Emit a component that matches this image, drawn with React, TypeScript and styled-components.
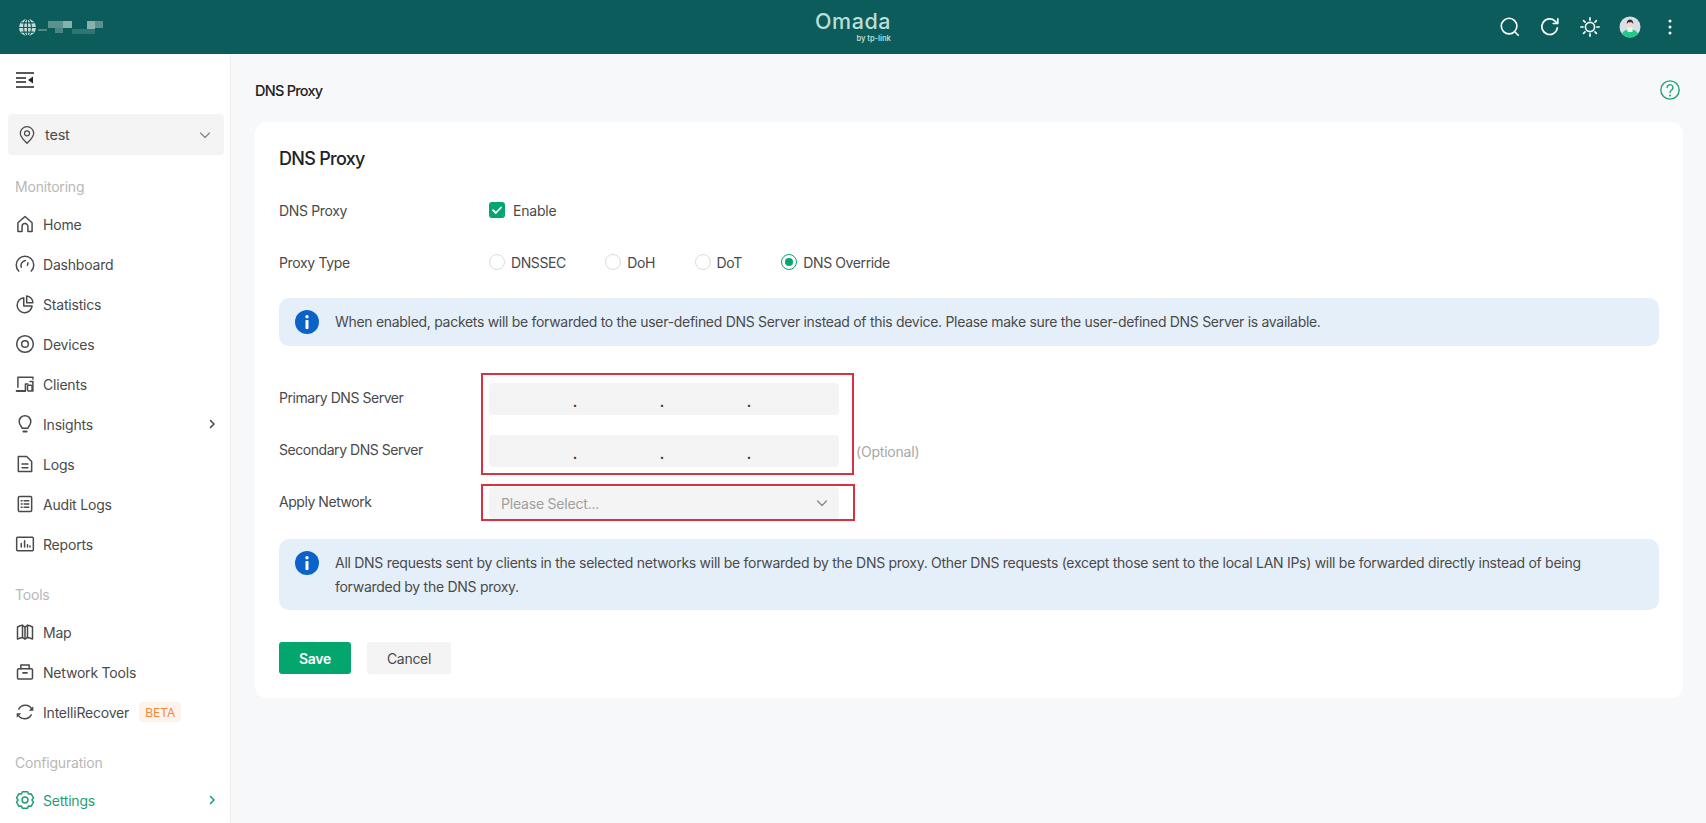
import React from "react";
import styled, { createGlobalStyle } from "styled-components";

const Global = createGlobalStyle`
	html, body {
		margin: 0;
		height: 100%;
		overflow: hidden;
		background: #f7f8f9;
		font-family: Inter, "Noto Sans", sans-serif;
		font-size: 14px;
		letter-spacing: -0.2px;
		color: #4a4a4a;
	}
	* { box-sizing: border-box; }
`;

const Page = styled.div`
	width: 1706px;
	height: 823px;
	display: flex;
	flex-direction: column;
	overflow: hidden;
`;

const Header = styled.header`
	height: 54px;
	flex: none;
	display: grid;
	grid-template-columns: 1fr auto 1fr;
	align-items: center;
	background: #0b5c5a;
	padding: 0 19px;
`;

const Brand = styled.div`
	display: flex;
	align-items: center;
`;

const Logo = styled.div`
	display: flex;
	flex-direction: column;
	align-items: flex-end;
	padding-bottom: 3px;
	color: #bcdcd6;
`;

const LogoName = styled.span`
	font-size: 21.5px;
	line-height: 26px;
	font-weight: 500;
	letter-spacing: 0.5px;
`;

const LogoSub = styled.span`
	font-size: 7.5px;
	line-height: 9px;
	font-weight: 600;
	letter-spacing: 0;
`;

const HeaderActions = styled.div`
	display: flex;
	justify-content: flex-end;
	align-items: center;
	gap: 18px;
	color: #fff;
	margin-right: 6px;
`;

const Blur = styled.svg`
	filter: blur(0.7px);
`;

const Body = styled.div`
	flex: 1;
	display: flex;
	min-height: 0;
`;

const Sidebar = styled.aside`
	width: 231px;
	flex: none;
	background: #fff;
	border-right: 1px solid #ececec;
	padding: 15px 6px 0 8px;
	color: #4a4a4a;
`;

const Collapse = styled.div`
	height: 22px;
	padding-left: 8px;
	color: #222;
	display: flex;
	align-items: center;
`;

const SiteSelect = styled.div`
	height: 41px;
	margin: 23px 0 22px;
	border-radius: 4px;
	background: #f4f4f4;
	display: flex;
	align-items: center;
	padding: 0 12px 0 9px;
	gap: 8px;
	font-size: 14.5px;
`;

const SiteName = styled.span`
	flex: 1;
`;

const SectionLabel = styled.div`
	height: 20px;
	line-height: 20px;
	margin: 21px 0 7px 7px;
	color: #b8b8b8;
`;

const NavItem = styled.div<{ $active?: boolean }>`
	height: 40px;
	display: flex;
	align-items: center;
	gap: 8px;
	padding: 0 6px 0 7px;
	color: ${(p) => (p.$active ? "#1f9e78" : "#4a4a4a")};
`;

const NavText = styled.span`
	white-space: nowrap;
`;

const Beta = styled.span`
	margin-left: 2px;
	padding: 0 6px;
	height: 20px;
	line-height: 21px;
	border-radius: 3px;
	background: #fdf3ea;
	color: #f0883e;
	font-size: 12px;
	letter-spacing: 0;
`;

const Chevron = styled.svg`
	margin-left: auto;
	flex: none;
`;

const Main = styled.main`
	flex: 1;
	padding: 0 23px 0 24px;
`;

const PageHead = styled.div`
	height: 68px;
	padding: 19px 2px 15px 0;
	display: flex;
	justify-content: space-between;
	align-items: center;
`;

const PageTitle = styled.h1`
	margin: 0;
	font-size: 14.5px;
	font-weight: 500;
	letter-spacing: -0.75px;
	color: #222;
`;

const HelpIcon = styled.div`
	color: #1f9e78;
	display: flex;
`;

const Card = styled.section`
	background: #fff;
	border-radius: 12px;
	padding: 24px;
`;

const CardTitle = styled.h2`
	margin: 0 0 24px;
	height: 24px;
	line-height: 26px;
	font-size: 18px;
	font-weight: 500;
	letter-spacing: -0.7px;
	color: #222;
`;

const Row = styled.div<{ $gap?: number }>`
	display: grid;
	grid-template-columns: 210px 1fr;
	align-items: center;
	min-height: 32px;
	margin-bottom: ${(p) => p.$gap ?? 20}px;
`;

const Label = styled.label`
	letter-spacing: -0.35px;
`;

const FieldLabel = styled(Label)`
	margin-bottom: 3px;
	letter-spacing: -0.45px;
`;

const Checkbox = styled.span`
	width: 16px;
	height: 16px;
	border-radius: 3px;
	background: #05a66e;
	display: flex;
	align-items: center;
	justify-content: center;
	color: #fff;
`;

const OptionLine = styled.div`
	display: flex;
	align-items: center;
	gap: 8px;
`;

const RadioGroup = styled.div`
	display: flex;
	align-items: center;
	gap: 39.5px;
	letter-spacing: -0.4px;
`;

const RadioOption = styled.div`
	display: flex;
	align-items: center;
	gap: 6px;
`;

const Radio = styled.span<{ $on?: boolean }>`
	width: 16px;
	height: 16px;
	border-radius: 50%;
	border: 1px solid ${(p) => (p.$on ? "#05a66e" : "#dcdcdc")};
	display: flex;
	align-items: center;
	justify-content: center;
	&::after {
		content: "";
		display: ${(p) => (p.$on ? "block" : "none")};
		width: 8px;
		height: 8px;
		border-radius: 50%;
		background: #05a66e;
	}
`;

const Banner = styled.div<{ $gap: number }>`
	display: flex;
	align-items: flex-start;
	gap: 16px;
	padding: 12px 16px;
	margin-bottom: ${(p) => p.$gap}px;
	background: #e5eff9;
	border-radius: 10px;
	line-height: 24px;
	letter-spacing: -0.3px;
`;

const TallBanner = styled(Banner)`
	padding-bottom: 11px;
	letter-spacing: -0.28px;
`;

const BannerIcon = styled.svg`
	flex: none;
`;

const Fields = styled.div`
	position: relative;
`;

const RedBox = styled.div<{ $top: number; $height: number; $width: number }>`
	position: absolute;
	left: 202px;
	top: ${(p) => p.$top}px;
	width: ${(p) => p.$width}px;
	height: ${(p) => p.$height}px;
	border: 2px solid #d8323f;
	pointer-events: none;
`;

const FieldLine = styled.div`
	display: flex;
	align-items: center;
	gap: 17px;
`;

const IpInput = styled.div`
	width: 350px;
	height: 32px;
	border-radius: 4px;
	background: #f4f4f4;
	display: grid;
	grid-template-columns: repeat(4, 1fr);
	padding: 0 1px;
`;

const IpDot = styled.span`
	text-align: right;
	padding: 11px 0 0;
	line-height: 16px;
	color: #333;
	font-weight: 600;
`;

const Hint = styled.span`
	color: #a8a8a8;
`;

const Select = styled.div`
	width: 350px;
	height: 32px;
	border-radius: 4px;
	background: #f4f4f4;
	display: flex;
	align-items: center;
	justify-content: space-between;
	padding: 0 10px 0 12px;
	color: #a0a0a0;
`;

const Actions = styled.div`
	display: flex;
	gap: 16px;
`;

const Button = styled.button<{ $primary?: boolean }>`
	height: 32px;
	width: ${(p) => (p.$primary ? 72 : 84)}px;
	border: 0;
	border-radius: 3px;
	font-family: inherit;
	font-size: 14px;
	letter-spacing: -0.3px;
	font-weight: ${(p) => (p.$primary ? 600 : 400)};
	background: ${(p) => (p.$primary ? "#05a66e" : "#f4f4f4")};
	color: ${(p) => (p.$primary ? "#fff" : "#4a4a4a")};
`;

const Icon = ({ size = 20, width = 1.8, children }: { size?: number; width?: number; children: React.ReactNode }) => (
	<svg width={size} height={size} viewBox="0 0 24 24" fill="none" stroke="currentColor" strokeWidth={width} strokeLinecap="round" strokeLinejoin="round" style={{ flex: "none" }}>
		{children}
	</svg>
);

const icons: Record<string, React.ReactNode> = {
	Home: <path d="M3.500 21V10.500L12 3l8.500 7.500V21h-5v-6a3.500 3.500 0 0 0-7 0v6z" />,
	Dashboard: (
		<>
			<path d="M4.500 20.500A10.500 10.500 0 1 1 19.500 20.500" />
			<path d="M7.500 16a6.200 6.200 0 0 1 5-8.200" />
			<path d="M15.500 10.500l-.5 3" />
		</>
	),
	Statistics: (
		<>
			<path d="M10.500 4.500a9 9 0 1 0 10 10h-10z" />
			<path d="M14 2.500a8 8 0 0 1 7.500 8H14z" />
		</>
	),
	Devices: (
		<>
			<circle cx="12" cy="12" r="10" />
			<circle cx="12" cy="12" r="4" />
		</>
	),
	Clients: (
		<>
			<path d="M3.500 16V4h18v2" />
			<path d="M2 20.500h10" strokeWidth="2.400" />
			<rect x="15" y="13.500" width="5.500" height="7" rx="1.200" />
			<path d="M12.500 20.500V12h3M18 9h3.500v11.500h-1" />
		</>
	),
	Insights: (
		<>
			<path d="M8.500 17c-.3-2-3.500-3.800-3.500-8a7 7 0 0 1 14 0c0 4.200-3.200 6-3.500 8z" />
			<path d="M10 21h4" strokeWidth="2.200" />
		</>
	),
	Logs: (
		<>
			<path d="M4 3h10l6 6v12H4z" />
			<path d="M8.500 12h7M8.500 16.500h7" />
		</>
	),
	"Audit Logs": (
		<>
			<rect x="4" y="3" width="16" height="18" rx="1.500" />
			<path d="M7.500 8h1M11 8h5.500M7.500 12h1M11 12h5.500M7.500 16h1M11 16h5.500" />
		</>
	),
	Reports: (
		<>
			<rect x="2" y="4" width="20" height="16" rx="1" />
			<path d="M7.500 15.500v-4M11.500 15.500V8M15 15.500v-2.500M18 15.500v-1" />
		</>
	),
	Map: (
		<>
			<path d="M3 6c2.500-1.500 4.500-2 6-2l3 2 3-2c1.500 0 3.500.5 6 2v14.500c-2.500-1.500-4.500-2-6-2l-3 2-3-2c-1.500 0-3.500.5-6 2z" />
			<path d="M9 4v14.500M15 4v14.500M12 6v14" />
		</>
	),
	"Network Tools": (
		<>
			<rect x="3" y="8" width="18" height="12.500" rx="1.500" />
			<path d="M7 8V3.500h10V8" />
			<path d="M9.500 13h5" strokeWidth="2" />
		</>
	),
	IntelliRecover: (
		<>
			<path d="M4.500 8.500A9 9 0 0 1 20.500 9" />
			<path d="M19.500 15.500A9 9 0 0 1 3.500 15" />
			<path d="M22 5v5.500h-5.500z" fill="currentColor" stroke="none" />
			<path d="M2 19v-5.500h5.500z" fill="currentColor" stroke="none" />
		</>
	),
	Settings: (
		<>
			<path d="M9 3h6l1.200 2.800 3-.4 3 5-1.900 2.600 1.900 2.600-3 5-3-.4L15 23H9l-1.200-2.800-3 .4-3-5L3.700 13 1.800 10.400l3-5 3 .4z" transform="translate(0 -1)" />
			<circle cx="12" cy="12" r="3.500" />
		</>
	),
};

const RightChevron = () => (
	<Chevron width="12" height="12" viewBox="0 0 12 12" fill="none" stroke="currentColor" strokeWidth="1.600" strokeLinecap="round" strokeLinejoin="round">
		<path d="M4.500 2.500L8 6l-3.500 3.500" />
	</Chevron>
);

const DownChevron = ({ color }: { color: string }) => (
	<svg width="14" height="14" viewBox="0 0 14 14" fill="none" stroke={color} strokeWidth="1.300" strokeLinecap="round" strokeLinejoin="round">
		<path d="M2.500 5l4.500 4.500L11.500 5" />
	</svg>
);

const InfoIcon = () => (
	<BannerIcon width="24" height="24" viewBox="0 0 24 24">
		<circle cx="12" cy="12" r="12" fill="#0b62c9" />
		<circle cx="12" cy="6.800" r="1.700" fill="#fff" />
		<rect x="10.500" y="10" width="3" height="9" rx="0.800" fill="#fff" />
	</BannerIcon>
);

const BlurredName = () => (
	<Blur width="70" height="30" viewBox="0 0 70 30">
		<rect x="2" y="17" width="9" height="2" fill="#4f8a87" />
		<rect x="12" y="9" width="15" height="7" fill="#5d918d" />
		<rect x="27" y="9" width="9" height="7" fill="#86b1ac" />
		<rect x="19" y="16" width="8" height="5" fill="#4a8583" />
		<rect x="36" y="17" width="23" height="5" fill="#2f7573" />
		<rect x="51" y="9" width="8" height="8" fill="#86b1ac" />
		<rect x="59" y="9" width="8" height="7" fill="#5d918d" />
	</Blur>
);

const primaryNav = ["Home", "Dashboard", "Statistics", "Devices", "Clients", "Insights", "Logs", "Audit Logs", "Reports"];
const toolNav = ["Map", "Network Tools", "IntelliRecover"];

const NavEntry = ({ name, active }: { name: string; active?: boolean }) => (
	<NavItem $active={active}>
		<Icon>{icons[name]}</Icon>
		<NavText>{name}</NavText>
		{name === "IntelliRecover" && <Beta>BETA</Beta>}
		{(name === "Insights" || name === "Settings") && <RightChevron />}
	</NavItem>
);

const IpField = () => (
	<IpInput>
		<IpDot>.</IpDot>
		<IpDot>.</IpDot>
		<IpDot>.</IpDot>
	</IpInput>
);

export default function App() {
	return (
		<Page>
			<Global />
			<Header>
				<Brand>
					<svg width="17" height="17" viewBox="0 0 24 24">
						<circle cx="12" cy="12" r="12" fill="#bfdcd7" />
						<path d="M12 0v24M0 12h24M3 5.500h18M3 18.500h18" stroke="#0b5c5a" strokeWidth="1.500" />
						<ellipse cx="12" cy="12" rx="5.500" ry="12" fill="none" stroke="#0b5c5a" strokeWidth="1.500" />
					</svg>
					<BlurredName />
				</Brand>
				<Logo>
					<LogoName>Omada</LogoName>
					<LogoSub>by tp-link</LogoSub>
				</Logo>
				<HeaderActions>
					<Icon size={22}>
						<circle cx="11" cy="11" r="8.500" />
						<path d="M18 18l3 3" />
					</Icon>
					<Icon size={22}>
						<path d="M20 13a8.500 8.500 0 1 1-2.500-7.500L20 8" />
						<path d="M20.500 3v5.200h-5" />
					</Icon>
					<Icon size={22}>
						<circle cx="12" cy="12" r="5" />
						<path d="M12 2v2.500M12 19.500V22M2 12h2.500M19.500 12H22M5 5l1.600 1.600M17.400 17.400L19 19M5 19l1.600-1.600M17.400 6.600L19 5" />
					</Icon>
					<svg width="22" height="22" viewBox="0 0 22 22">
						<defs>
							<clipPath id="avatar">
								<circle cx="11" cy="11" r="10.500" />
							</clipPath>
						</defs>
						<g clipPath="url(#avatar)">
							<rect width="22" height="22" fill="#d9dee4" />
							<path d="M2 22c0-6 4-8.500 9-8.500s9 2.500 9 8.500z" fill="#22c98a" />
							<rect x="8.500" y="11" width="5" height="5" fill="#eef4f0" />
							<circle cx="11" cy="8.500" r="3" fill="#eed8cf" />
							<path d="M7.800 8c-.4-3 1.400-4.500 3.200-4.500S14.600 5 14.200 8c-.8-1.400-1.500-1.800-3.200-1.800S8.600 6.600 7.800 8z" fill="#33333a" />
						</g>
					</svg>
					<svg width="22" height="22" viewBox="0 0 22 22" fill="#fff">
						<circle cx="11" cy="5" r="1.500" />
						<circle cx="11" cy="11" r="1.500" />
						<circle cx="11" cy="17" r="1.500" />
					</svg>
				</HeaderActions>
			</Header>
			<Body>
				<Sidebar>
					<Collapse>
						<svg width="18" height="16" viewBox="0 0 18 16" fill="none" stroke="currentColor" strokeWidth="1.400">
							<path d="M0 1h18M0 15h18M0 6h10M0 10h10" />
							<path d="M17 4.500v7L12 8z" fill="currentColor" stroke="none" />
						</svg>
					</Collapse>
					<SiteSelect>
						<Icon size={20} width={1.500}>
							<path d="M12 22c-1.500-2-8-6.500-8-12a8 8 0 0 1 16 0c0 5.500-6.500 10-8 12z" />
							<circle cx="12" cy="10" r="3" />
						</Icon>
						<SiteName>test</SiteName>
						<DownChevron color="#888" />
					</SiteSelect>
					<SectionLabel>Monitoring</SectionLabel>
					{primaryNav.map((name) => (
						<NavEntry key={name} name={name} />
					))}
					<SectionLabel>Tools</SectionLabel>
					{toolNav.map((name) => (
						<NavEntry key={name} name={name} />
					))}
					<SectionLabel>Configuration</SectionLabel>
					<NavEntry name="Settings" active />
				</Sidebar>
				<Main>
					<PageHead>
						<PageTitle>DNS Proxy</PageTitle>
						<HelpIcon>
							<Icon size={22} width={1.500}>
								<circle cx="12" cy="12" r="10" />
								<path d="M8.800 9.300a3.200 3.200 0 1 1 5 2.700c-1.200.8-1.800 1.500-1.800 2.800" />
								<path d="M12 17.800v.2" strokeWidth="2" />
							</Icon>
						</HelpIcon>
					</PageHead>
					<Card>
						<CardTitle>DNS Proxy</CardTitle>
						<Row>
							<Label>DNS Proxy</Label>
							<OptionLine>
								<Checkbox>
									<svg width="12" height="12" viewBox="0 0 12 12" fill="none" stroke="currentColor" strokeWidth="1.800" strokeLinecap="round" strokeLinejoin="round">
										<path d="M2 6.200l2.800 2.800L10 3.500" />
									</svg>
								</Checkbox>
								<span>Enable</span>
							</OptionLine>
						</Row>
						<Row>
							<Label>Proxy Type</Label>
							<RadioGroup>
								<RadioOption><Radio /><span>DNSSEC</span></RadioOption>
								<RadioOption><Radio /><span>DoH</span></RadioOption>
								<RadioOption><Radio /><span>DoT</span></RadioOption>
								<RadioOption><Radio $on /><span>DNS Override</span></RadioOption>
							</RadioGroup>
						</Row>
						<Banner $gap={37}>
							<InfoIcon />
							<span>When enabled, packets will be forwarded to the user-defined DNS Server instead of this device. Please make sure the user-defined DNS Server is available.</span>
						</Banner>
						<Fields>
							<RedBox $top={-10} $height={102} $width={373} />
							<RedBox $top={101} $height={37} $width={374} />
							<Row>
								<FieldLabel>Primary DNS Server</FieldLabel>
								<IpField />
							</Row>
							<Row>
								<FieldLabel>Secondary DNS Server</FieldLabel>
								<FieldLine>
									<IpField />
									<Hint>(Optional)</Hint>
								</FieldLine>
							</Row>
							<Row>
								<FieldLabel>Apply Network</FieldLabel>
								<Select>
									<span>Please Select...</span>
									<DownChevron color="#888" />
								</Select>
							</Row>
						</Fields>
						<TallBanner $gap={32}>
							<InfoIcon />
							<span>All DNS requests sent by clients in the selected networks will be forwarded by the DNS proxy. Other DNS requests (except those sent to the local LAN IPs) will be forwarded directly instead of being forwarded by the DNS proxy.</span>
						</TallBanner>
						<Actions>
							<Button $primary>Save</Button>
							<Button>Cancel</Button>
						</Actions>
					</Card>
				</Main>
			</Body>
		</Page>
	);
}
